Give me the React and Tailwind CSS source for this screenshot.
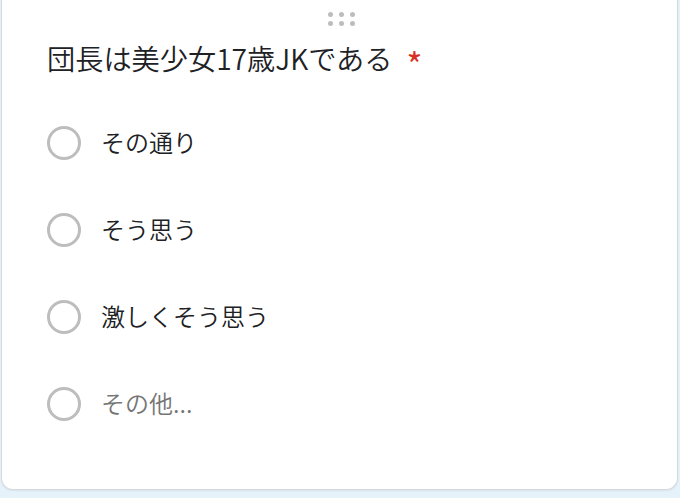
export default function App() {
  const opts = [
    { t: "その通り", c: "text-[#202124]" },
    { t: "そう思う", c: "text-[#202124]" },
    { t: "激しくそう思う", c: "text-[#202124]" },
    { t: "その他...", c: "text-[#757575]" },
  ];
  return (
    <div
      className="w-[680px] h-[498px] bg-[#e5f2f9] overflow-hidden"
      style={{ fontFamily: '"Noto Sans CJK JP", "Noto Sans", sans-serif' }}
    >
      <div className="ml-[1px] w-[677px] h-[490px] bg-white border border-t-0 border-[#d5d9dd] rounded-b-[12px] shadow-[0_1px_2px_rgba(0,0,0,0.06)] flex flex-col">
        <div className="pt-[12px] flex justify-center">
          <div className="grid grid-cols-3 gap-x-[6px] gap-y-[4px] ml-[4px]">
            {Array.from({ length: 6 }).map((_, i) => (
              <div key={i} className="w-[5px] h-[5px] rounded-full bg-[#bdbdbd]" />
            ))}
          </div>
        </div>
        <div className="mt-[14px] pl-[45px] flex items-start text-[28.2px] leading-[36px] text-[#202124] font-[350]">
          <span>団長は美少女17歳JKである</span>
          <span className="ml-[14px] text-[#d93025] text-[34px] leading-[36px] font-normal mt-[6px]">*</span>
        </div>
        <div className="mt-[17px] flex flex-col">
          {opts.map((o) => (
            <div key={o.t} className="h-[87px] pl-[45px] flex items-center">
              <div className="w-[34px] h-[34px] rounded-full border-[3px] border-[#bdbdbd] shrink-0" />
              <span className={`ml-[20px] mb-[2px] text-[24px] leading-[32px] font-[350] ${o.c}`}>{o.t}</span>
            </div>
          ))}
        </div>
      </div>
    </div>
  );
}
